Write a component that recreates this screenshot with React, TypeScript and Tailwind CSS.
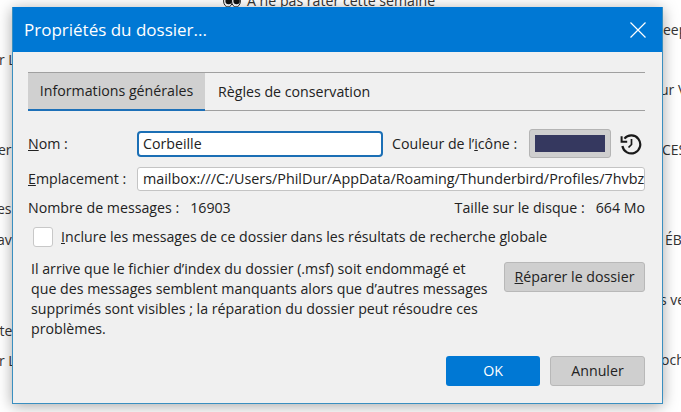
import React from 'react';

const RestoreIcon = () => (
  <svg width="22" height="22" viewBox="0 0 22 22" fill="none" stroke="#1a1a1a" strokeWidth="2.2" className="block">
    <path d="M4.4 5.6A9 9 0 1 1 2.4 13" />
    <path d="M1.6 3.2v5.6h5.6" strokeWidth="2" />
    <path d="M11.5 6v5.5l-3 3" strokeWidth="1.7" />
  </svg>
);

const EyesIcon = () => (
  <svg width="18" height="14" viewBox="0 0 18 14" className="block">
    <ellipse cx="5" cy="7" rx="4.4" ry="6" fill="#fff" stroke="#222" strokeWidth="1" />
    <ellipse cx="13" cy="7" rx="4.4" ry="6" fill="#fff" stroke="#222" strokeWidth="1" />
    <circle cx="5.6" cy="7" r="3.2" fill="#111" />
    <circle cx="13.6" cy="7" r="3.2" fill="#111" />
  </svg>
);

const BackText = ({ className, children }: { className: string; children: React.ReactNode }) => (
  <span className={`absolute whitespace-nowrap text-[14px] leading-5 text-[#333] ${className}`}>{children}</span>
);

export default function App() {
  return (
    <div className="relative w-[681px] h-[412px] overflow-hidden bg-white font-['Open_Sans','Noto_Sans',sans-serif] text-[#222]">
      {/* page behind the dialog */}
      <div className="absolute left-[223px] top-[-9px] flex items-center gap-[6px] text-[14.15px] leading-5 text-[#333] whitespace-nowrap">
        <EyesIcon />
        <span>À ne pas rater cette semaine</span>
      </div>
      <BackText className="left-[-1px] top-[50px]">r L</BackText>
      <BackText className="left-[-2px] top-[140px]">er</BackText>
      <BackText className="left-[-3px] top-[199px]">es</BackText>
      <BackText className="left-[-3px] top-[230px]">av</BackText>
      <BackText className="left-[-9px] top-[321px]">ute</BackText>
      <BackText className="left-[-1px] top-[351px]">r L</BackText>
      <BackText className="left-[663px] top-[20px]">eep</BackText>
      <BackText className="left-[660px] top-[80px]">ur V</BackText>
      <BackText className="left-[662px] top-[140px]">CES</BackText>
      <BackText className="left-[665px] top-[230px]">ÉB</BackText>
      <BackText className="left-[660px] top-[290px]">s ve</BackText>
      <BackText className="left-[661px] top-[350px]">och</BackText>

      {/* dialog */}
      <div className="absolute left-[12px] top-[7px] w-[651px] h-[397px] flex flex-col bg-[#f0f0f0] border border-[#3a8fc0] border-t-0 shadow-[0_2px_14px_rgba(0,0,0,0.35)]">
        <div className="h-[45px] shrink-0 flex items-center justify-between bg-[#0078d4] pl-[11px] pr-[16px] text-white">
          <span className="text-[17px] leading-6">Propriétés du dossier...</span>
          <svg width="16" height="16" viewBox="0 0 16 16" stroke="white" strokeWidth="1.2" fill="none">
            <path d="M.5.5l15 15M15.5.5l-15 15" />
          </svg>
        </div>

        <div className="flex-1 flex flex-col pl-[15px] pr-[17px] pt-[20px] pb-[17px] text-[14.2px] leading-5">
          {/* tabs */}
          <div className="flex h-[39px] shrink-0 border-y border-[#a0a0a0]">
            <div className="w-[177px] flex items-center justify-center bg-[#d0d0d0] border-b-2 border-[#1d70b8] -mb-px">Informations générales</div>
            <div className="px-[13px] flex items-center">Règles de conservation</div>
          </div>

          {/* name row */}
          <div className="flex items-center mt-[18px] h-[29px]">
            <span className="w-[109px]"><u>N</u>om :</span>
            <div className="w-[246px] h-[26px] flex items-center px-[4px] bg-white border-2 border-[#1b6fb5] rounded-[4px]">Corbeille</div>
            <span className="ml-[9px] w-[137px] whitespace-nowrap">Couleur de l’<u>i</u>cône :</span>
            <div className="w-[82px] h-[29px] p-[5px] bg-[#cfcfcf] border border-[#b4b4b4] rounded-[3px]">
              <div className="w-full h-full bg-[#35385f]"></div>
            </div>
            <span className="ml-[9px]"><RestoreIcon /></span>
          </div>

          {/* location row */}
          <div className="flex items-center mt-[9px] h-[24px]">
            <span className="w-[109px]"><u>E</u>mplacement :</span>
            <div className="flex-1 min-w-0 h-[24px] flex items-center px-[5px] overflow-hidden whitespace-nowrap bg-white border border-[#c4c4c4] rounded-[3px] text-[14.35px]">
              mailbox:///C:/Users/PhilDur/AppData/Roaming/Thunderbird/Profiles/7hvbz
            </div>
          </div>

          {/* stats */}
          <div className="flex justify-between mt-[7px] h-5">
            <span>Nombre de messages :<span className="ml-[11px]">16903</span></span>
            <span>Taille sur le disque :<span className="ml-[11px]">664 Mo</span></span>
          </div>

          {/* checkbox */}
          <div className="flex items-center mt-[9px] ml-[5px] h-[20px]">
            <div className="w-5 h-5 bg-white border border-[#c8c8c8] rounded-[3px]"></div>
            <span className="ml-[8px] text-[14.15px]"><u>I</u>nclure les messages de ce dossier dans les résultats de recherche globale</span>
          </div>

          {/* repair */}
          <div className="flex justify-between mt-[12px]">
            <p className="ml-[3px] whitespace-nowrap">
              Il arrive que le fichier d’index du dossier (.msf) soit endommagé et<br />
              que des messages semblent manquants alors que d’autres messages<br />
              supprimés sont visibles ; la réparation du dossier peut résoudre ces<br />
              problèmes.
            </p>
            <button className="w-[141px] h-[30px] mt-[3px] bg-[#cfcfcf] border border-[#b8b8b8] rounded-[3px]"><u>R</u>éparer le dossier</button>
          </div>

          {/* footer */}
          <div className="mt-auto flex justify-end gap-[10px]">
            <button className="w-[94px] h-[30px] bg-[#0078d4] text-white rounded-[3px]">OK</button>
            <button className="w-[95px] h-[30px] bg-[#cfcfcf] border border-[#b8b8b8] rounded-[3px]">Annuler</button>
          </div>
        </div>
      </div>
    </div>
  );
}
